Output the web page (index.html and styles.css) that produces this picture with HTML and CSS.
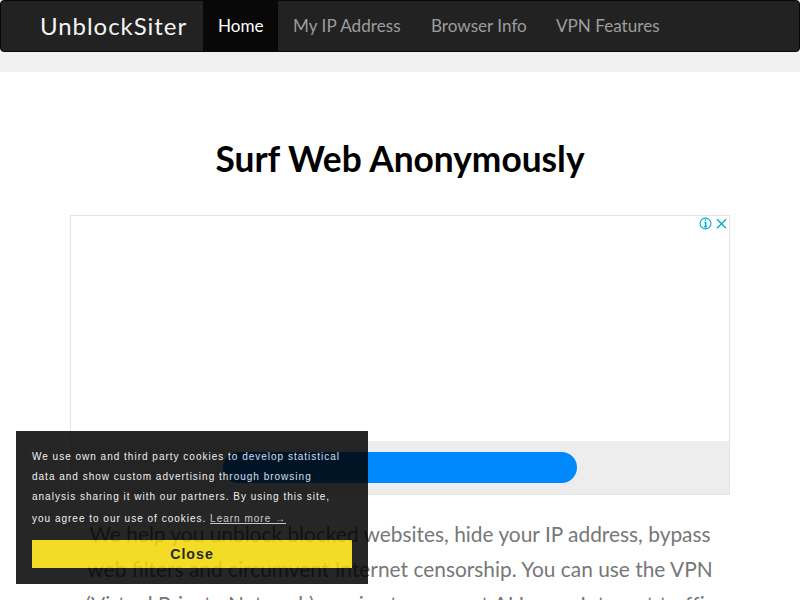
FILE: index.html
```html
<!DOCTYPE html>
<html lang="en">
<head>
<meta charset="utf-8">
<title>UnblockSiter</title>
<link rel="stylesheet" href="styles.css">
</head>
<body>
<header class="top">
  <nav class="navbar">
    <a class="brand">UnblockSiter</a>
    <a class="item home active">Home</a>
    <a class="item address">My IP Address</a>
    <a class="item info">Browser Info</a>
    <a class="item">VPN Features</a>
  </nav>
</header>
<main class="content">
  <h1>Surf Web Anonymously</h1>
  <div class="ad">
    <svg class="adchoices" width="30" height="15" viewBox="0 0 30 15" fill="none" stroke="#00aecd">
      <circle cx="6.5" cy="7.5" r="5.4" stroke-width="1.1"/>
      <path d="M5.4 6.5h1.3v4M5.2 10.7h2.8M5.8 4.3h1.4" stroke-width="1.4"/>
      <path d="M18 3.2l9 9M27 3.2l-9 9" stroke-width="1.4"/>
    </svg>
    <div class="ad-foot"><div class="ad-button"></div></div>
  </div>
  <p class="lead">We help you unblock blocked websites, hide your IP address, bypass<br>web filters and circumvent Internet censorship. You can use the VPN<br><span class="wide">(Virtual Private Network) service to connect ALL your Internet traffic</span></p>
</main>
<div class="cookie">
  <div class="message">We use own and third party cookies to develop statistical data and show custom advertising through browsing analysis sharing it with our partners. By using this site, <span class="last">you agree to our use of cookies. <a class="more">Learn more →</a></span></div>
  <a class="close">Close</a>
</div>
</body>
</html>
```
FILE: styles.css
```css
* { box-sizing: border-box; }
body {
  margin: 0;
  height: 600px;
  overflow: hidden;
  background: #fff;
  font-family: Lato, sans-serif;
}
.top { height: 72px; background: #f0f0f0; }
.navbar {
  display: flex;
  height: 52px;
  padding-left: 24px;
  background: #222;
  border: 1px solid #080808;
  border-radius: 4px;
}
.brand {
  padding: 0 15px;
  width: 178px;
  color: #f4f4f4;
  font-size: 24px;
  line-height: 50px;
  letter-spacing: .95px;
  white-space: nowrap;
}
.item {
  padding: 0 15px;
  color: #9d9d9d;
  font-size: 17.1px;
  line-height: 50px;
  white-space: nowrap;
}
.home { width: 75px; }
.address { width: 138px; letter-spacing: .05px; }
.info { width: 125px; }
.active { background: #080808; color: #fff; }
.content { padding: 0 70px; text-align: center; }
h1 {
  margin: 0;
  padding-top: 65px;
  height: 143px;
  font-size: 35.3px;
  line-height: 43px;
  font-weight: 700;
  color: #000;
}
.ad {
  position: relative;
  display: flex;
  flex-direction: column;
  justify-content: flex-end;
  height: 280px;
  border: 1px solid #e4e4e4;
}
.adchoices { position: absolute; top: 0; right: 0; }
.ad-foot { height: 53px; padding: 11px 0 0 152px; background: #ededed; }
.ad-button { width: 354px; height: 31px; border-radius: 15.5px; background: #0088ff; }
.lead {
  margin: 21px -10px 0;
  font-size: 20.9px;
  line-height: 35px;
  color: #777;
}
.wide { letter-spacing: .06px; }
.cookie {
  position: fixed;
  left: 16px;
  top: 431px;
  width: 352px;
  height: 153px;
  padding: 16px;
  background: #000;
  opacity: .85;
  color: #eee;
  font-family: "Liberation Sans", sans-serif;
}
.message { font-size: 10px; line-height: 20px; letter-spacing: 1px; height: 93px; }
.last { display: block; padding-top: 2px; }
.more { opacity: .8; text-decoration: underline; }
.close {
  display: block;
  height: 28px;
  background: #f1d600;
  color: #000;
  font-size: 14.2px;
  font-weight: 700;
  line-height: 28px;
  letter-spacing: 1px;
  text-align: center;
}
```
